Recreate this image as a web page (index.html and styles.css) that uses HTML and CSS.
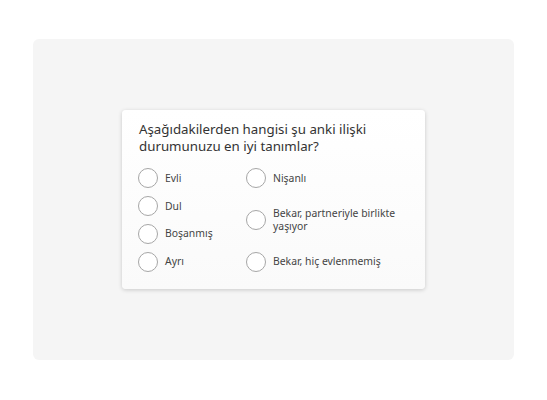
FILE: index.html
```html
<!DOCTYPE html>
<html lang="tr">
<head>
<meta charset="utf-8">
<link rel="stylesheet" href="styles.css">
</head>
<body>
<div class="panel">
  <div class="card">
    <div class="question">Aşağıdakilerden hangisi şu anki ilişki durumunuzu en iyi tanımlar?</div>
    <div class="options">
      <div class="col col-left">
        <div class="opt"><span class="radio"></span><span class="label">Evli</span></div>
        <div class="opt"><span class="radio"></span><span class="label">Dul</span></div>
        <div class="opt"><span class="radio"></span><span class="label">Boşanmış</span></div>
        <div class="opt"><span class="radio"></span><span class="label">Ayrı</span></div>
      </div>
      <div class="col col-right">
        <div class="opt"><span class="radio"></span><span class="label">Nişanlı</span></div>
        <div class="opt"><span class="radio"></span><span class="label">Bekar, partneriyle birlikte yaşıyor</span></div>
        <div class="opt"><span class="radio"></span><span class="label">Bekar, hiç evlenmemiş</span></div>
      </div>
    </div>
  </div>
</div>
</body>
</html>
```
FILE: styles.css
```css
html, body {
  margin: 0;
  padding: 0;
  background: #ffffff;
}
body {
  padding: 39px 33px 40px 33px;
  font-family: "Noto Sans", "Open Sans", sans-serif;
}
.panel {
  height: 321px;
  background: #f5f5f5;
  border-radius: 6px;
  display: flex;
  align-items: center;
  justify-content: center;
}
.card {
  width: 303px;
  box-sizing: border-box;
  padding: 11px 16px 17px 16px;
  background: linear-gradient(#ffffff, #fafafa);
  border-radius: 4px;
  box-shadow: 0 1px 4px rgba(0,0,0,0.18);
}
.question {
  font-size: 13.3px;
  line-height: 17px;
  color: #333333;
  width: 250px;
  padding-left: 1px;
}
.options {
  display: flex;
  margin-top: 13px;
}
.col {
  display: flex;
  flex-direction: column;
}
.col-left {
  width: 108px;
  gap: 7.7px;
}
.col-right {
  flex: 1;
  justify-content: space-between;
}
.opt {
  display: flex;
  align-items: center;
  gap: 7px;
  min-height: 20px;
}
.radio {
  flex: none;
  width: 18px;
  height: 18px;
  border: 1px solid #a6a6a6;
  border-radius: 50%;
  background: #ffffff;
}
.label {
  font-size: 10.4px;
  line-height: 13px;
  color: #444444;
  max-width: 140px;
}
```
